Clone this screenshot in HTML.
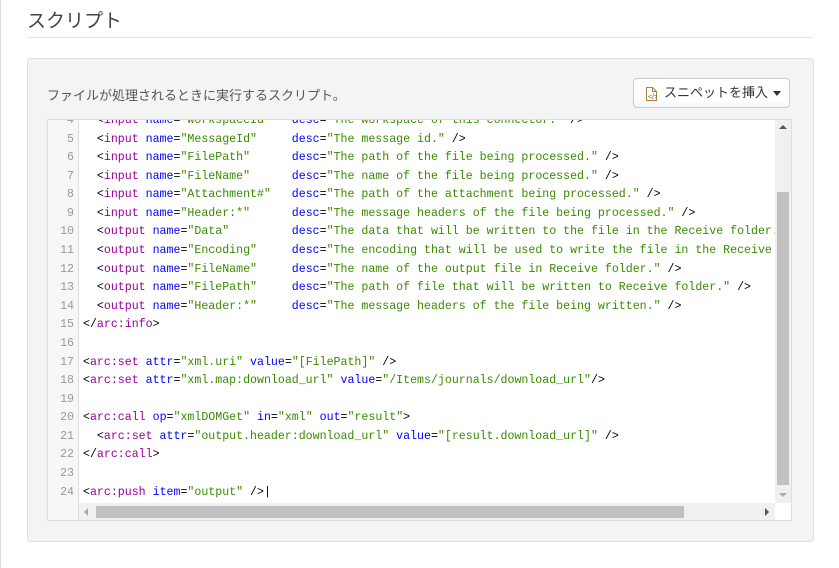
<!DOCTYPE html>
<html><head><meta charset="utf-8"><style>
body{margin:0;width:839px;height:568px;background:#fff;position:relative;overflow:hidden;font-family:"Liberation Sans","Noto Sans CJK JP",sans-serif;}
.lb{position:absolute;left:0;top:0;width:1px;height:568px;background:#ddd}
h1{position:absolute;left:27px;top:6px;margin:0;font-weight:normal;font-size:19px;color:#444;}
.hr{position:absolute;left:27px;top:37px;width:786px;height:1px;background:#e3e3e3}
.panel{position:absolute;left:27px;top:58px;width:785px;height:482px;background:#f4f4f4;border:1px solid #e0e0e0;border-radius:3px}
.desc{position:absolute;left:47px;top:85px;font-size:13px;color:#555}
.btn{position:absolute;left:633px;top:78px;width:157px;height:30px;border:1px solid #ccc;border-radius:4px;background:linear-gradient(#fff,#fff 80%,#eef3f8);box-sizing:border-box;font-size:13px;color:#333;line-height:28px}
.ed{position:absolute;left:47px;top:119px;width:745px;height:402px;border:1px solid #ddd;background:#fff;overflow:hidden;box-sizing:border-box}
.gut{position:absolute;left:0;top:0;width:30px;height:402px;background:#f7f7f7;border-right:1px solid #ddd}
pre{position:absolute;left:0;top:-8px;margin:0;font-family:"Liberation Mono",monospace;font-size:11.6px;line-height:18.58px;color:#000}
.n{display:inline-block;width:26px;text-align:right;color:#999;margin-right:9px}
.t{color:#990099}.a{color:#0000ff}.s{color:#3a8a00}
.vs{position:absolute;left:727px;top:0;width:16px;height:383px;background:#f0f0f0}
.vt{position:absolute;left:2px;top:72px;width:12px;height:293px;background:#c1c1c1}
.hs{position:absolute;left:31px;top:383px;width:696px;height:17px;background:#f0f0f0}
.ht{position:absolute;left:17px;top:3px;width:588px;height:12px;background:#c1c1c1}
</style></head><body>
<div class="lb"></div>
<h1>スクリプト</h1>
<div class="hr"></div>
<div class="panel"></div>
<div class="desc">ファイルが処理されるときに実行するスクリプト。</div>
<div class="btn"><svg style="position:absolute;left:12px;top:8px" width="11" height="14" viewBox="0 0 11 14"><path d="M.5.5h6l4 4v9H.5z M6.5.5v4h4" fill="none" stroke="#b08040"/><text x="2" y="12" font-size="7" fill="#666">&lt;/&gt;</text></svg><span style="position:absolute;left:30px">スニペットを挿入</span><span style="position:absolute;left:139px;top:12px;border-left:4px solid transparent;border-right:4px solid transparent;border-top:5px solid #333"></span></div>
<div class="ed">
<div class="gut"></div>
<pre><span class="n">4</span>  &lt;<span class="t">input</span> <span class="a">name</span>=<span class="s">"WorkspaceId"</span>   <span class="a">desc</span>=<span class="s">"The workspace of this connector."</span> /&gt;
<span class="n">5</span>  &lt;<span class="t">input</span> <span class="a">name</span>=<span class="s">"MessageId"</span>     <span class="a">desc</span>=<span class="s">"The message id."</span> /&gt;
<span class="n">6</span>  &lt;<span class="t">input</span> <span class="a">name</span>=<span class="s">"FilePath"</span>      <span class="a">desc</span>=<span class="s">"The path of the file being processed."</span> /&gt;
<span class="n">7</span>  &lt;<span class="t">input</span> <span class="a">name</span>=<span class="s">"FileName"</span>      <span class="a">desc</span>=<span class="s">"The name of the file being processed."</span> /&gt;
<span class="n">8</span>  &lt;<span class="t">input</span> <span class="a">name</span>=<span class="s">"Attachment#"</span>   <span class="a">desc</span>=<span class="s">"The path of the attachment being processed."</span> /&gt;
<span class="n">9</span>  &lt;<span class="t">input</span> <span class="a">name</span>=<span class="s">"Header:*"</span>      <span class="a">desc</span>=<span class="s">"The message headers of the file being processed."</span> /&gt;
<span class="n">10</span>  &lt;<span class="t">output</span> <span class="a">name</span>=<span class="s">"Data"</span>         <span class="a">desc</span>=<span class="s">"The data that will be written to the file in the Receive folder."</span> /&gt;
<span class="n">11</span>  &lt;<span class="t">output</span> <span class="a">name</span>=<span class="s">"Encoding"</span>     <span class="a">desc</span>=<span class="s">"The encoding that will be used to write the file in the Receive folder."</span> /&gt;
<span class="n">12</span>  &lt;<span class="t">output</span> <span class="a">name</span>=<span class="s">"FileName"</span>     <span class="a">desc</span>=<span class="s">"The name of the output file in Receive folder."</span> /&gt;
<span class="n">13</span>  &lt;<span class="t">output</span> <span class="a">name</span>=<span class="s">"FilePath"</span>     <span class="a">desc</span>=<span class="s">"The path of file that will be written to Receive folder."</span> /&gt;
<span class="n">14</span>  &lt;<span class="t">output</span> <span class="a">name</span>=<span class="s">"Header:*"</span>     <span class="a">desc</span>=<span class="s">"The message headers of the file being written."</span> /&gt;
<span class="n">15</span>&lt;/<span class="t">arc:info</span>&gt;
<span class="n">16</span>
<span class="n">17</span>&lt;<span class="t">arc:set</span> <span class="a">attr</span>=<span class="s">"xml.uri"</span> <span class="a">value</span>=<span class="s">"[FilePath]"</span> /&gt;
<span class="n">18</span>&lt;<span class="t">arc:set</span> <span class="a">attr</span>=<span class="s">"xml.map:download_url"</span> <span class="a">value</span>=<span class="s">"/Items/journals/download_url"</span>/&gt;
<span class="n">19</span>
<span class="n">20</span>&lt;<span class="t">arc:call</span> <span class="a">op</span>=<span class="s">"xmlDOMGet"</span> <span class="a">in</span>=<span class="s">"xml"</span> <span class="a">out</span>=<span class="s">"result"</span>&gt;
<span class="n">21</span>  &lt;<span class="t">arc:set</span> <span class="a">attr</span>=<span class="s">"output.header:download_url"</span> <span class="a">value</span>=<span class="s">"[result.download_url]"</span> /&gt;
<span class="n">22</span>&lt;/<span class="t">arc:call</span>&gt;
<span class="n">23</span>
<span class="n">24</span>&lt;<span class="t">arc:push</span> <span class="a">item</span>=<span class="s">"output"</span> /&gt;|</pre>
<div class="vs"><div style="position:absolute;left:4px;top:5px;border-left:4px solid transparent;border-right:4px solid transparent;border-bottom:4px solid #555"></div><div class="vt"></div><div style="position:absolute;left:4px;top:373px;border-left:4px solid transparent;border-right:4px solid transparent;border-top:4px solid #aaa"></div></div>
<div class="hs"><div style="position:absolute;left:5px;top:5px;border-top:4px solid transparent;border-bottom:4px solid transparent;border-right:4px solid #aaa"></div><div class="ht"></div><div style="position:absolute;left:686px;top:5px;border-top:4px solid transparent;border-bottom:4px solid transparent;border-left:4px solid #555"></div></div>
</div>
</body></html>
